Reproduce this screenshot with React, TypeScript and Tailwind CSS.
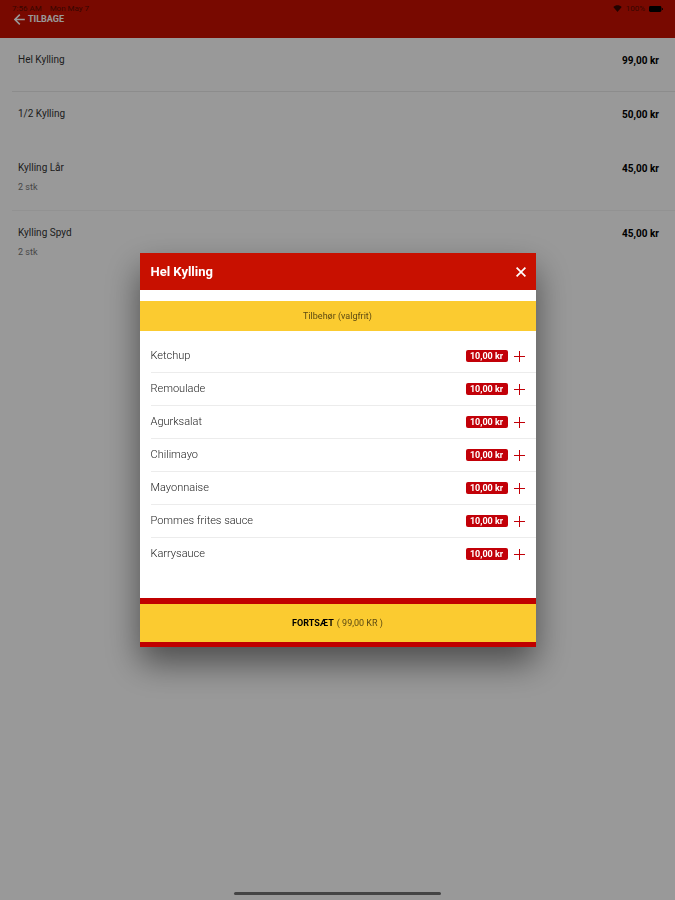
type Dish = { name: string; price: string; note?: string; divider?: boolean };

const dishes: Dish[] = [
  { name: "Hel Kylling", price: "99,00 kr", divider: true },
  { name: "1/2 Kylling", price: "50,00 kr" },
  { name: "Kylling Lår", price: "45,00 kr", note: "2 stk", divider: true },
  { name: "Kylling Spyd", price: "45,00 kr", note: "2 stk" },
];

const extras = [
  "Ketchup",
  "Remoulade",
  "Agurksalat",
  "Chilimayo",
  "Mayonnaise",
  "Pommes frites sauce",
  "Karrysauce",
];

const StatusBar = () => {
  return (
    <div className="flex justify-between px-3 pt-1 text-[8px] leading-[9px] text-[#5c0a00]">
      <div className="flex gap-2">
        <span>7:56 AM</span>
        <span>Mon May 7</span>
      </div>
      <div className="flex items-center gap-1">
        <svg width="9" height="7" viewBox="0 0 9 7" fill="#3a0500">
          <path d="M4.5 7 0.3 2C2.6-.2 6.4-.2 8.7 2Z" />
        </svg>
        <span>100%</span>
        <svg width="14" height="6" viewBox="0 0 14 6" fill="#000">
          <rect width="12.4" height="6" rx="1.4" />
          <rect x="12.9" y="2" width="1" height="2" rx="0.5" />
        </svg>
      </div>
    </div>
  );
};

const Header = () => {
  return (
    <header className="h-[38px] bg-[#c81000]">
      <StatusBar />
      <button
        type="button"
        className="ml-[14px] flex items-center gap-[3px] text-[9px] leading-3 font-bold text-white"
      >
        <svg width="11" height="11" viewBox="0 0 11 11" fill="none" stroke="currentColor" strokeWidth="1.5">
          <path d="M10.8 5.5H1M5.8.6.9 5.5l4.9 4.9" />
        </svg>
        TILBAGE
      </button>
    </header>
  );
};

const DishList = () => {
  return (
    <ul className="pl-3">
      {dishes.map((dish) => (
        <li
          key={dish.name}
          className={`flex items-start justify-between border-b pl-[6px] pr-4 pt-4 ${
            dish.note ? "h-[65px]" : "h-[54px]"
          } ${
            dish.divider
              ? dish.note
                ? "border-[#f4f4f4]"
                : "border-[#e9e9e9]"
              : "border-transparent"
          }`}
        >
          <div>
            <h2 className="text-[10px] leading-3 text-[#333]">{dish.name}</h2>
            {dish.note && (
              <p className="mt-[7px] text-[9px] leading-3 text-[#777]">{dish.note}</p>
            )}
          </div>
          <span className="text-[10px] leading-[14px] font-bold text-black">{dish.price}</span>
        </li>
      ))}
    </ul>
  );
};

const ExtraRow = ({ name }: { name: string }) => {
  return (
    <li className="flex h-[33px] items-center border-b border-[#ececec] pr-[11px] last:border-transparent">
      <span className="grow text-[11px] leading-[14px] font-light text-[#222]">{name}</span>
      <span className="flex h-3 w-[42px] items-center justify-center rounded-[2px] bg-[#c20008] text-[9px] leading-3 font-bold text-white">
        10,00 kr
      </span>
      <button type="button" aria-label={`Tilføj ${name}`} className="ml-[6px] text-[#c20008]">
        <svg width="11" height="11" viewBox="0 0 11 11" stroke="currentColor" strokeWidth="1">
          <path d="M5.5 0v11M0 5.5h11" />
        </svg>
      </button>
    </li>
  );
};

const ExtrasModal = () => {
  return (
    <div
      role="dialog"
      aria-modal="true"
      aria-labelledby="modal-title"
      className="w-[396px] bg-white shadow-[0_16px_32px_rgba(0,0,0,0.5)]"
    >
      <div className="flex h-[37px] items-center justify-between bg-[#c81000] pl-[11px] pr-[10px] text-white">
        <h1 id="modal-title" className="text-[13px] leading-4 font-bold">
          Hel Kylling
        </h1>
        <button type="button" aria-label="Luk">
          <svg width="10" height="10" viewBox="0 0 10 10" fill="none" stroke="currentColor" strokeWidth="1.7">
            <path d="M.6.6l8.8 8.8M9.4.6.6 9.4" />
          </svg>
        </button>
      </div>
      <h2 className="mt-[11px] flex h-[30px] items-center justify-center bg-[#fbcb30] text-[9px] leading-3 text-[#5c4a12]">
        Tilbehør (valgfrit)
      </h2>
      <ul className="pb-[27px] pl-[11px] pt-[9px]">
        {extras.map((name) => (
          <ExtraRow key={name} name={name} />
        ))}
      </ul>
      <div className="bg-[#c00000] pb-[5px] pt-[6px]">
        <button
          type="button"
          className="flex h-[38px] w-full items-center justify-center gap-[3px] bg-[#fbcb30] text-[9px] leading-3 text-[#5c4a12]"
        >
          <span className="font-bold text-black">FORTSÆT</span>
          <span>( 99,00 KR )</span>
        </button>
      </div>
    </div>
  );
};

export default function App() {
  return (
    <div className="min-h-screen bg-white font-[Roboto,sans-serif]">
      <Header />
      <main>
        <DishList />
      </main>
      <div className="fixed inset-0 flex items-center justify-center bg-black/40">
        <ExtrasModal />
      </div>
      {/* Home indicator */}
      <div className="fixed inset-x-0 bottom-[5px] flex justify-center">
        <div className="h-[3px] w-[207px] rounded-full bg-[#444]" />
      </div>
    </div>
  );
}
